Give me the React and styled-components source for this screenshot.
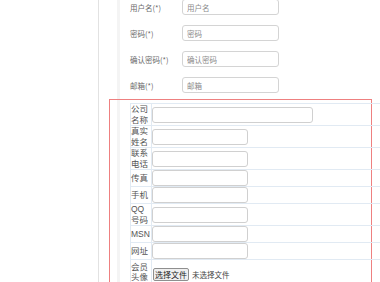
import styled, { createGlobalStyle } from 'styled-components'

const GlobalStyle = createGlobalStyle`
  html, body {
    margin: 0;
    padding: 0;
    background: #fff;
    overflow: hidden;
  }
  body {
    font-family: "Noto Sans CJK SC", "Liberation Sans", sans-serif;
  }
`

const topFields = [
  { label: '用户名(*)', placeholder: '用户名' },
  { label: '密码(*)', placeholder: '密码' },
  { label: '确认密码(*)', placeholder: '确认密码' },
  { label: '邮箱(*)', placeholder: '邮箱' },
]

const tableFields = [
  { label: '公司名称', wide: true },
  { label: '真实姓名' },
  { label: '联系电话' },
  { label: '传真' },
  { label: '手机' },
  { label: 'QQ号码' },
  { label: 'MSN' },
  { label: '网址' },
]

function App() {
  return (
    <>
      <GlobalStyle />
      <Page>
        <Sidebar />
        <Main>
          <TopForm>
            {topFields.map((f) => (
              <TopRow key={f.label}>
                <TopLabel>{f.label}</TopLabel>
                <TopInput type='text' placeholder={f.placeholder} />
              </TopRow>
            ))}
          </TopForm>
          <RedBox>
            <InfoTable>
              <tbody>
                {tableFields.map((f) => (
                  <tr key={f.label}>
                    <LabelCell>{f.label}</LabelCell>
                    <FieldCell>
                      <CellInput type='text' $wide={f.wide} />
                    </FieldCell>
                  </tr>
                ))}
                <tr>
                  <LabelCell>会员头像</LabelCell>
                  <FieldCell>
                    <FileButton type='button'>选择文件</FileButton>
                    <FileHint>未选择文件</FileHint>
                  </FieldCell>
                </tr>
              </tbody>
            </InfoTable>
          </RedBox>
        </Main>
      </Page>
    </>
  )
}
export default App

const Page = styled.div`
  display: flex;
  height: 282px;
  overflow: hidden;
`

const Sidebar = styled.div`
  width: 98px;
  flex-shrink: 0;
  border-right: 1px solid #e2e2e2;
`

const Main = styled.div`
  flex: 1;
  padding-left: 10px;
  background: linear-gradient(
    to right,
    transparent 18px,
    #f4f4f4 18px,
    #f4f4f4 21px,
    transparent 21px
  );
`

const TopForm = styled.div`
  display: flex;
  flex-direction: column;
  gap: 10px;
  margin-top: -1px;
  padding-left: 21px;
`

const TopRow = styled.div`
  display: flex;
  align-items: center;
  height: 16px;
`

const TopLabel = styled.label`
  width: 52px;
  font-size: 7.5px;
  color: #6a6a6a;
  white-space: nowrap;
`

const TopInput = styled.input`
  box-sizing: border-box;
  width: 97px;
  height: 16px;
  padding: 0 4px;
  border: 1px solid #d4d4d4;
  border-radius: 3px;
  font-family: inherit;
  font-size: 7.5px;
  color: #555;
  outline: none;
  &::placeholder {
    color: #8a8a8a;
  }
`

const RedBox = styled.div`
  box-sizing: border-box;
  width: 263px;
  height: 200px;
  margin-top: 6px;
  padding: 3px 0 0 20px;
  border: 1px solid #ee8080;
  border-bottom: none;
`

const InfoTable = styled.table`
  width: 300px;
  border-collapse: collapse;
  border: 1px solid #e1eaf3;
`

const LabelCell = styled.td`
  width: 19px;
  padding: 0 1px 0 0;
  font-family: "Liberation Sans", "Noto Sans CJK SC", sans-serif;
  font-size: 8.5px;
  line-height: 10.5px;
  color: #555;
  border: 1px solid #e1eaf3;
  vertical-align: middle;
`

const FieldCell = styled.td`
  padding: 0;
  border: 1px solid #e1eaf3;
  vertical-align: middle;
  white-space: nowrap;
`

const CellInput = styled.input`
  display: block;
  box-sizing: border-box;
  width: ${(p) => (p.$wide ? '161px' : '96px')};
  height: 16px;
  margin: 0;
  padding: 0 2px;
  border: 1px solid #d0d0d0;
  border-radius: 3px;
  outline: none;
`

const FileButton = styled.button`
  box-sizing: border-box;
  height: 13px;
  margin: 0 0 0 1px;
  padding: 0 1px;
  font-family: "Noto Sans CJK SC", sans-serif;
  font-size: 8px;
  line-height: 11px;
  color: #222;
  background: #efefef;
  border: 1px solid #8f8f8f;
  border-radius: 2px;
  vertical-align: middle;
`

const FileHint = styled.span`
  margin-left: 3px;
  font-size: 7.5px;
  color: #444;
  vertical-align: middle;
`
